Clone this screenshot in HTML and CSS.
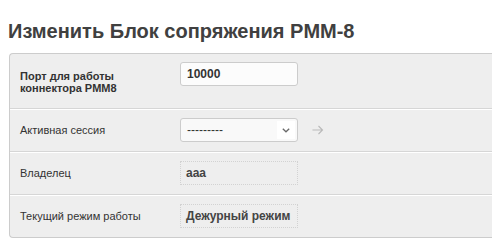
FILE: index.html
```html
<!DOCTYPE html>
<html lang="ru">
<head>
<meta charset="utf-8">
<title>Изменить Блок сопряжения PMM-8</title>
<link rel="stylesheet" href="styles.css">
</head>
<body>
<h1 class="title">Изменить Блок сопряжения PMM-8</h1>
<div class="panel">
  <div class="row row-first">
    <label class="label label-required" for="port">Порт для работы<br>коннектора PMM8</label>
    <div class="field">
      <input class="text-input" id="port" type="text" value="10000">
    </div>
  </div>
  <div class="row">
    <label class="label" for="session">Активная сессия</label>
    <div class="field">
      <div class="select">
        <span class="select-value">---------</span>
        <span class="select-chevron">
          <svg width="8" height="5" viewBox="0 0 8 5"><path d="M0.8 0.8 L4 3.8 L7.2 0.8" fill="none" stroke="#6a6a6a" stroke-width="1.3"/></svg>
        </span>
      </div>
      <span class="go-arrow">
        <svg width="12" height="10" viewBox="0 0 12 10"><path d="M0.5 5 H10.5 M6.5 1 L10.5 5 L6.5 9" fill="none" stroke="#b9b9b9" stroke-width="1.1"/></svg>
      </span>
    </div>
  </div>
  <div class="row">
    <span class="label">Владелец</span>
    <div class="field">
      <div class="readonly">aaa</div>
    </div>
  </div>
  <div class="row row-last">
    <span class="label">Текущий режим работы</span>
    <div class="field">
      <div class="readonly">Дежурный режим</div>
    </div>
  </div>
</div>
</body>
</html>
```
FILE: styles.css
```css
body {
  margin: 0;
  background: #ffffff;
  font-family: "Liberation Sans", Arial, sans-serif;
  color: #333333;
}
.title {
  margin: 20px 0 10px 8px;
  font-size: 20px;
  line-height: 23px;
  font-weight: bold;
  color: #404040;
}
.panel {
  margin-left: 9px;
  background: #eeeeee;
  border: 1px solid #cccccc;
  border-right: none;
  border-radius: 4px 0 0 4px;
}
.row {
  display: flex;
  align-items: center;
  padding: 8px 10px 9px 10px;
  border-top: 1px solid #ffffff;
  border-bottom: 1px solid #d6d6d6;
}
.row-first {
  align-items: flex-start;
  border-top: none;
}
.row-last {
  border-bottom: none;
}
.label {
  width: 160px;
  flex: none;
  font-size: 11px;
  line-height: 12px;
  color: #333333;
}
.label-required {
  font-weight: bold;
  padding: 8px 0 5px 0;
}
.field {
  display: flex;
  align-items: center;
  gap: 14px;
}
.text-input {
  box-sizing: border-box;
  width: 118px;
  height: 24px;
  margin: 0;
  padding: 0 6px;
  border: 1px solid #cccccc;
  border-radius: 3px;
  background: #fcfcfc;
  font-family: "Liberation Sans", Arial, sans-serif;
  font-size: 12px;
  font-weight: bold;
  color: #333333;
  outline: none;
}
.select {
  box-sizing: border-box;
  width: 118px;
  height: 24px;
  display: flex;
  align-items: center;
  justify-content: space-between;
  padding: 0 2px 0 6px;
  border: 1px solid #cccccc;
  border-radius: 3px;
  background: #f9f9f9;
  font-size: 12px;
  color: #333333;
}
.select-chevron {
  display: flex;
  align-items: center;
  justify-content: center;
  width: 18px;
  height: 18px;
  background: #ffffff;
}
.go-arrow {
  display: flex;
  align-items: center;
}
.readonly {
  box-sizing: border-box;
  width: 118px;
  height: 24px;
  display: flex;
  align-items: center;
  padding: 0 5px;
  border: 1px dotted #d2d2d2;
  font-size: 12px;
  font-weight: bold;
  color: #444444;
  white-space: nowrap;
}
```
